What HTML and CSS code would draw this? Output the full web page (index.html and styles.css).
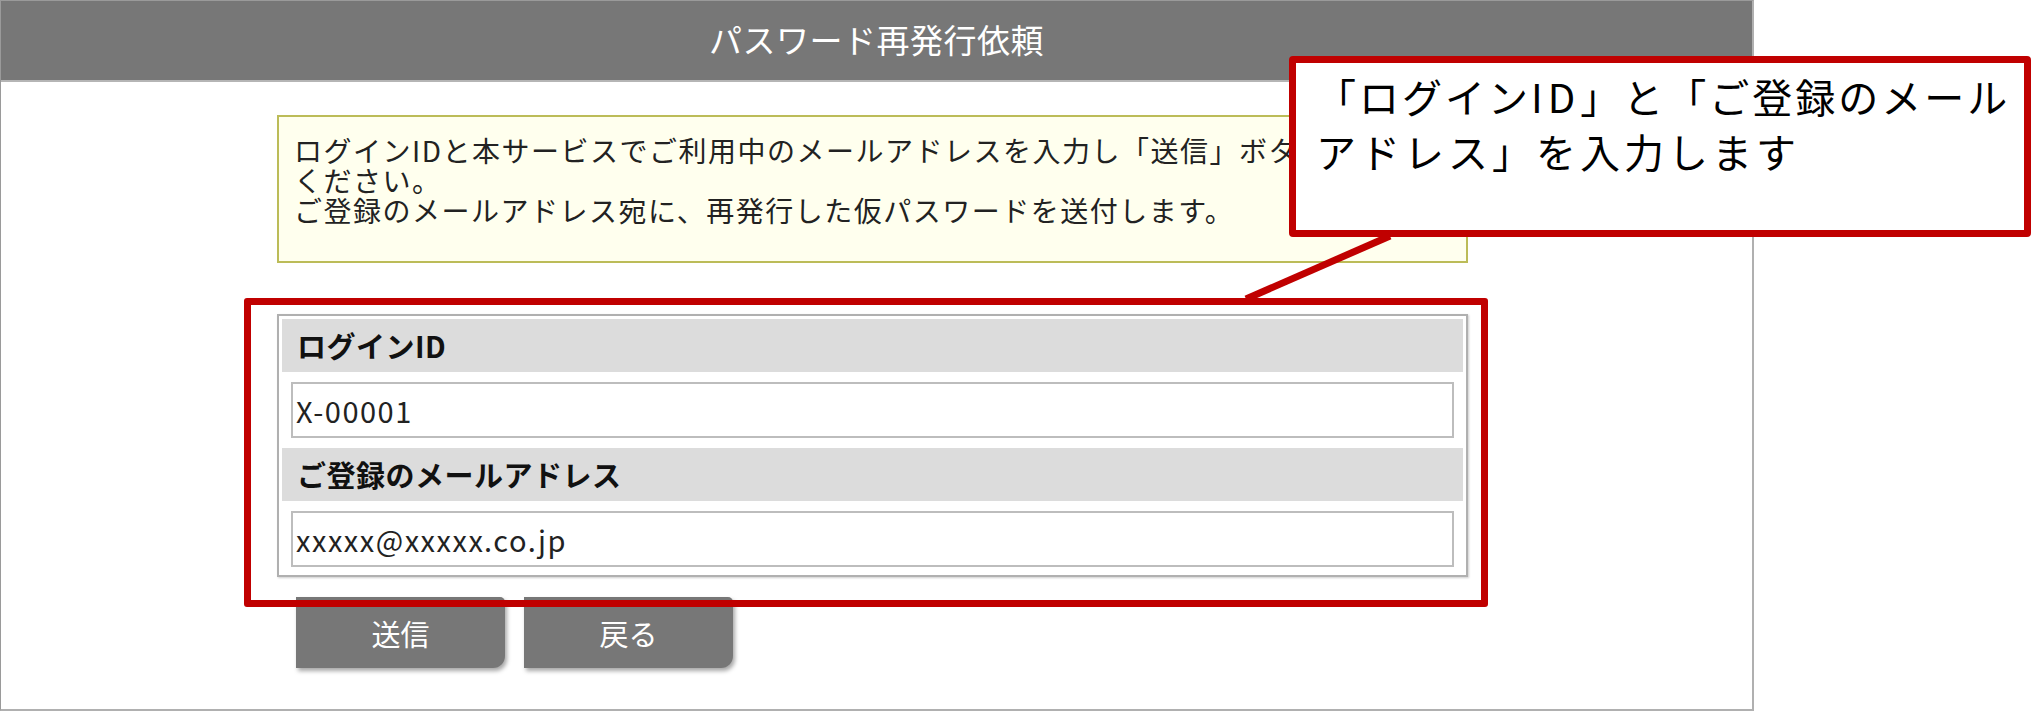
FILE: index.html
```html
<!DOCTYPE html>
<html lang="ja">
<head>
  <meta charset="UTF-8" />
  <title>パスワード再発行依頼</title>
  <link rel="stylesheet" href="styles.css">
</head>
<body>
  <div class="frame">
    <div class="title-bar">パスワード再発行依頼</div>

    <div class="content">
      <div class="notice">
        ログインIDと本サービスでご利用中のメールアドレスを入力し「送信」ボタンを押して<br>ください。<br>
        ご登録のメールアドレス宛に、再発行した仮パスワードを送付します。
      </div>

      <div class="form-table">
        <div class="field-label">ログインID</div>
        <input class="field-input" type="text" value="X-00001">
        <div class="field-label">ご登録のメールアドレス</div>
        <input class="field-input last" type="text" value="xxxxx@xxxxx.co.jp">
      </div>

      <div class="actions">
        <button class="btn">送信</button>
        <button class="btn">戻る</button>
      </div>
    </div>
  </div>

  <!-- annotation overlay -->
  <div class="highlight"></div>
  <svg class="connector" width="2035" height="712">
    <line x1="1390" y1="236" x2="1246" y2="299" stroke="#c00000" stroke-width="7" />
  </svg>
  <div class="callout">
    <span class="first">「ログイン<span class="latin">ID</span>」と「ご登録のメール</span><br>アドレス」を入力します
  </div>
</body>
</html>
```

FILE: styles.css
```css
body {
  margin: 0;
  background: #fff;
  color: #222;
  font-family: "Noto Sans CJK JP", "Noto Sans", sans-serif;
  width: 2035px;
  height: 712px;
  overflow: hidden;
  position: relative;
}

.frame {
  box-sizing: border-box;
  width: 1754px;
  height: 711px;
  border: 1px solid #9a9a9a;
  border-right: 2px solid #b0b0b0;
  border-bottom: 2px solid #b0b0b0;
}

.title-bar {
  height: 79px;
  line-height: 77px;
  background: #777;
  border-bottom: 2px solid #b5b5b5;
  color: #fff;
  font-size: 33px;
  text-align: center;
  letter-spacing: 0.5px;
}

.content {
  padding: 33px 0 0 276px;
}

.notice {
  box-sizing: border-box;
  width: 1191px;
  height: 148px;
  background: #ffffee;
  border: 2px solid #bcbc58;
  padding: 18px 10px 0 15px;
  font-size: 28px;
  line-height: 30px;
  letter-spacing: 1.5px;
}

.form-table {
  box-sizing: border-box;
  width: 1191px;
  margin-top: 51px;
  border: 2px solid #b0b0b0;
  padding: 3px 3px 8px 3px;
  box-shadow: 1px 1px 2px rgba(0, 0, 0, 0.2);
}

.field-label {
  height: 53px;
  line-height: 53px;
  background: #dcdcdc;
  padding-left: 15px;
  font-size: 29px;
  font-weight: bold;
  color: #111;
  letter-spacing: 0.5px;
}

.field-input {
  display: block;
  box-sizing: border-box;
  width: calc(100% - 18px);
  height: 56px;
  margin: 10px 9px;
  padding: 0 3px;
  border: 2px solid #bdbdbd;
  font-family: inherit;
  font-size: 29px;
  letter-spacing: 1.5px;
  color: #222;
  background: #fff;
}

.field-input.last {
  margin-bottom: 0;
}

.actions {
  display: flex;
  gap: 19px;
  margin-top: 20px;
  padding-left: 19px;
}

.btn {
  width: 209px;
  height: 71px;
  border: none;
  background: #777;
  color: #fff;
  font-family: inherit;
  font-size: 29px;
  border-radius: 0 5px 12px 0;
  box-shadow: 2px 3px 4px rgba(0, 0, 0, 0.35);
}

/* annotation layer */
.highlight {
  position: absolute;
  left: 244px;
  top: 298px;
  width: 1244px;
  height: 309px;
  box-sizing: border-box;
  border: 7px solid #c00000;
  border-radius: 3px;
}

.connector {
  position: absolute;
  left: 0;
  top: 0;
}

.callout {
  position: absolute;
  left: 1289px;
  top: 56px;
  width: 742px;
  height: 181px;
  box-sizing: border-box;
  border: 7px solid #c00000;
  border-radius: 4px;
  background: #fff;
  padding: 6px 0 0 20px;
  font-size: 40px;
  line-height: 55px;
  letter-spacing: 4px;
  white-space: nowrap;
  color: #000;
}

.callout .first {
  letter-spacing: 3px;
}

.callout .latin {
  letter-spacing: 5px;
}
```
